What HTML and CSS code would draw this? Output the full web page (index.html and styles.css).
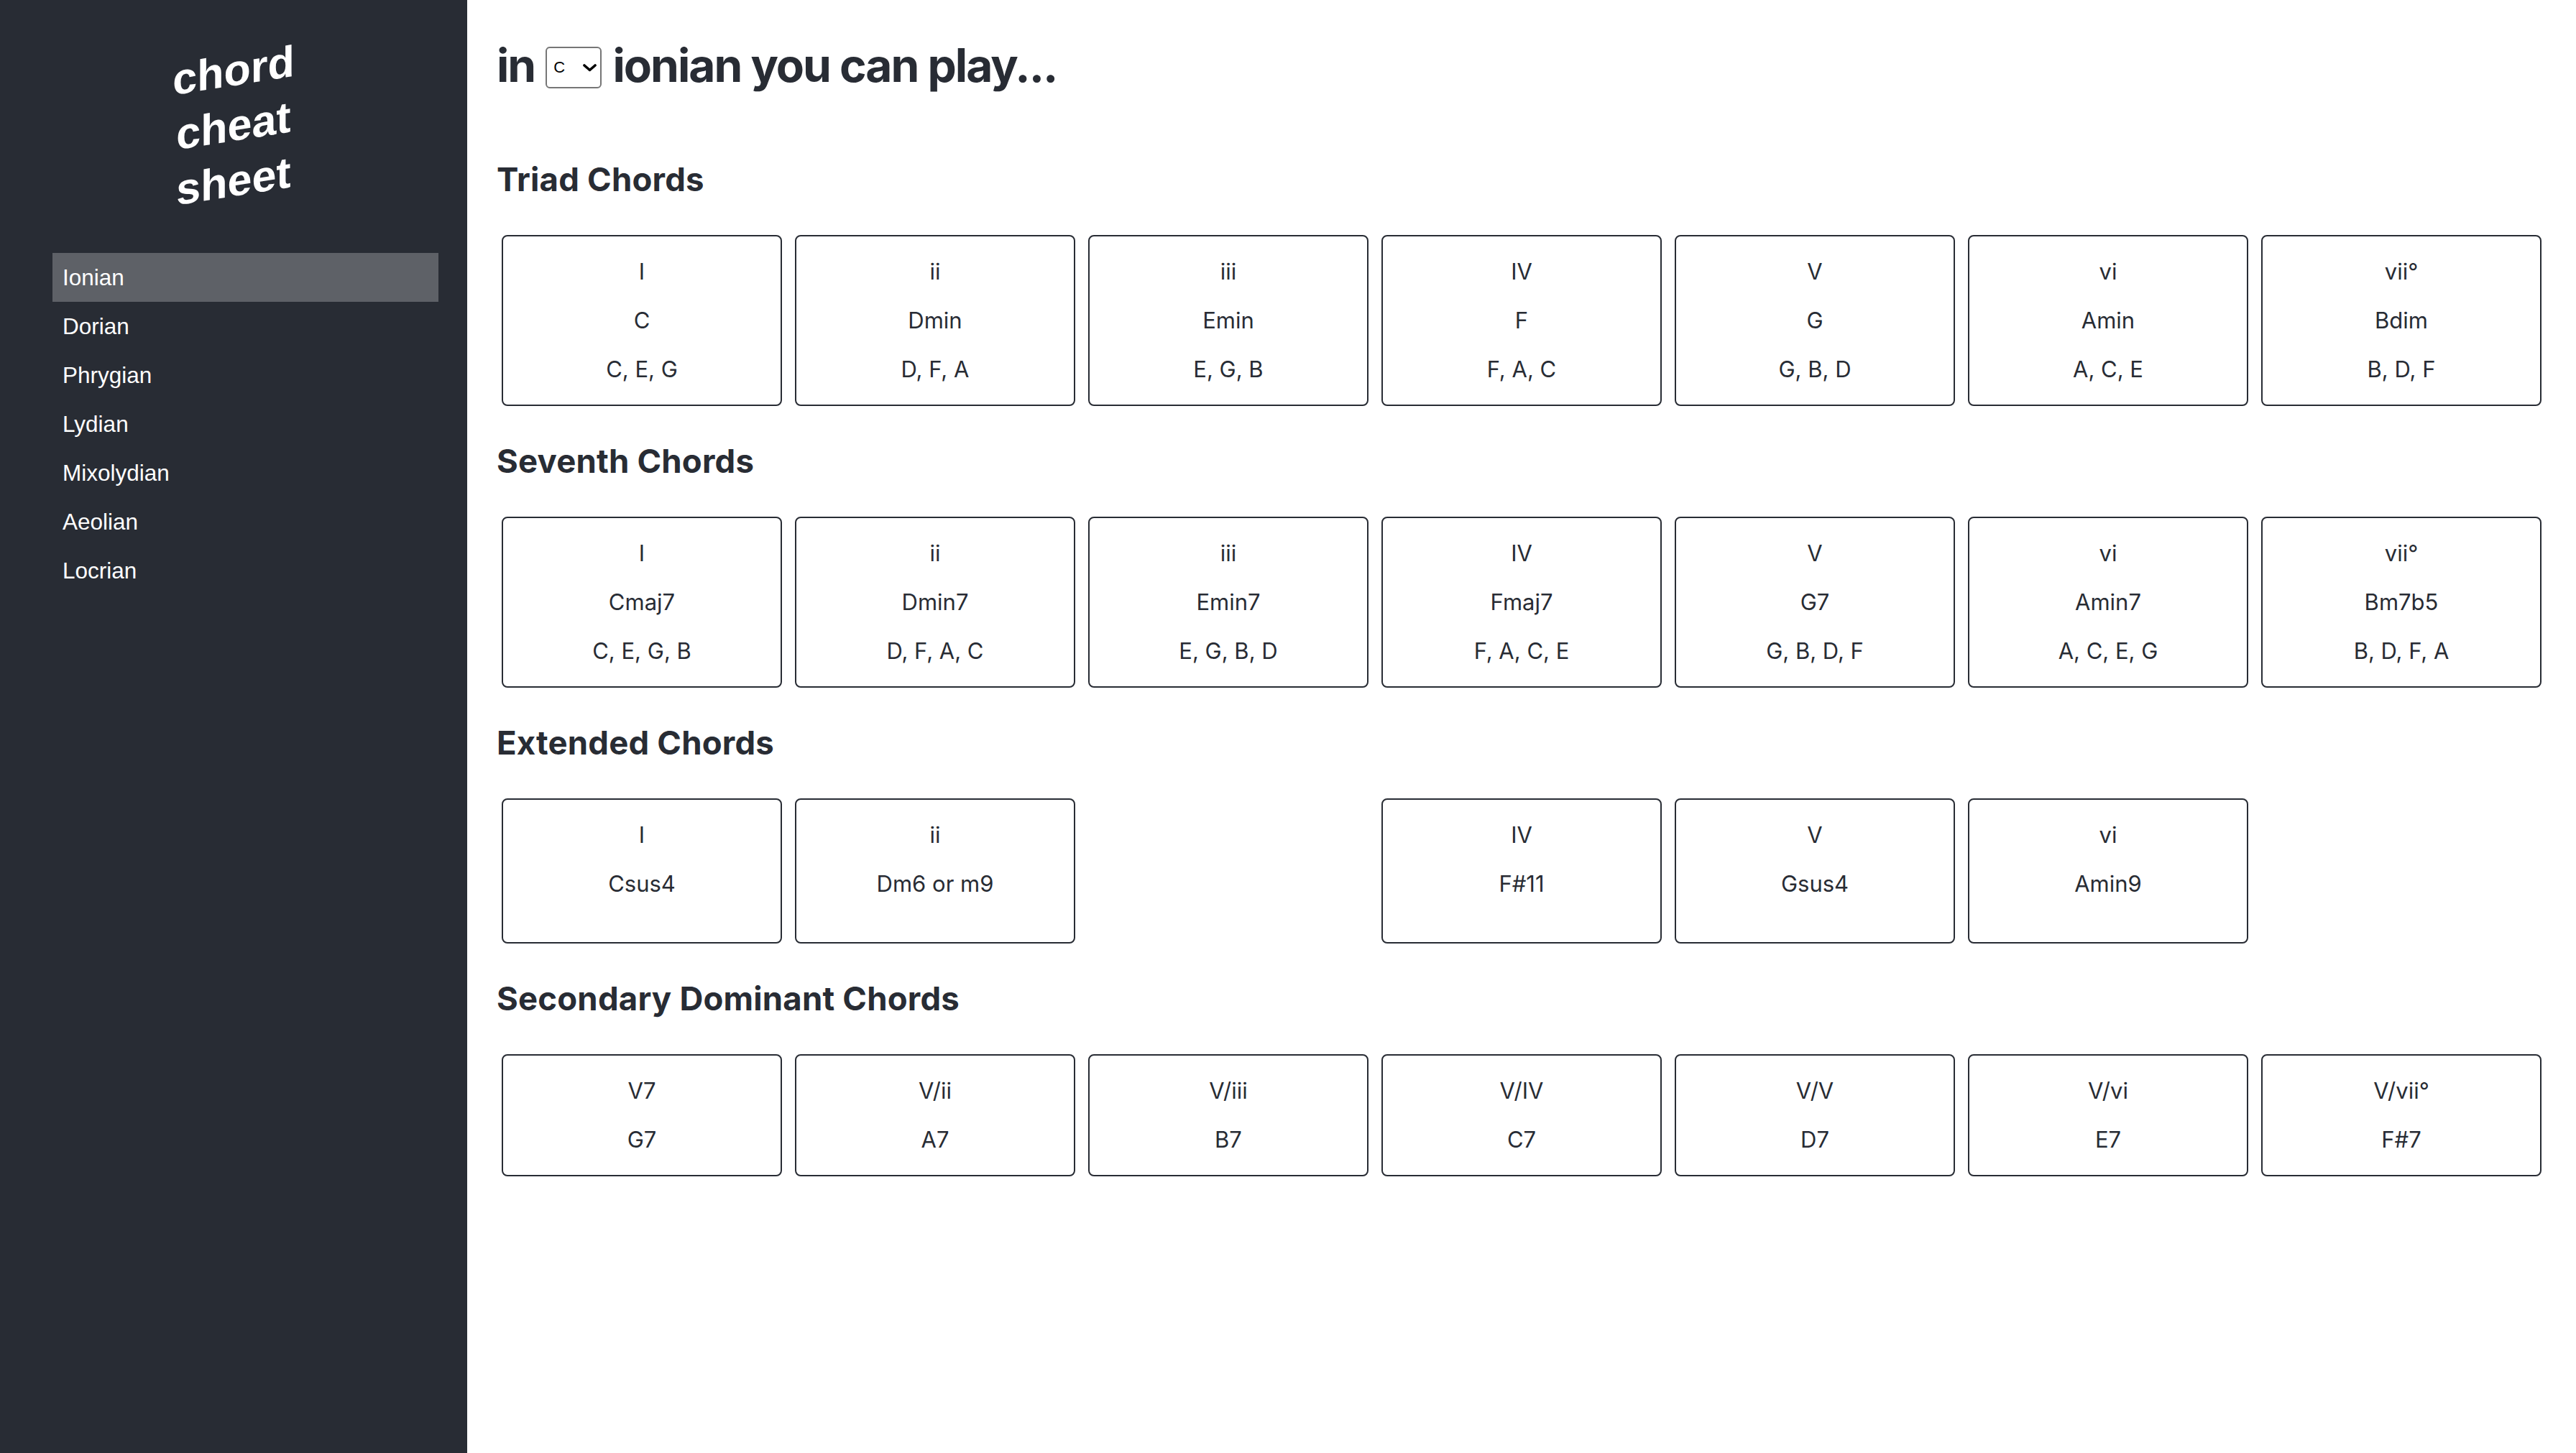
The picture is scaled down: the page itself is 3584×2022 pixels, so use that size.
FILE: index.html
```html
<!DOCTYPE html>
<html lang="en">
<head>
<meta charset="utf-8">
<title>chord cheat sheet</title>
<link rel="stylesheet" href="styles.css">
</head>
<body>
<div class="app">
  <aside class="sidebar">
    <div class="logo">chord<br>cheat<br>sheet</div>
    <nav class="modes">
      <a class="mode active">Ionian</a>
      <a class="mode">Dorian</a>
      <a class="mode">Phrygian</a>
      <a class="mode">Lydian</a>
      <a class="mode">Mixolydian</a>
      <a class="mode">Aeolian</a>
      <a class="mode">Locrian</a>
    </nav>
  </aside>
  <main class="content">
    <h1 class="title">in <span class="key-select"><select class="key"><option>C</option><option>D</option><option>E</option><option>F</option><option>G</option><option>A</option><option>B</option></select><svg class="chevron" width="19" height="11" viewBox="0 0 19 11"><polyline points="2,2 9.5,8.5 17,2" fill="none" stroke="#000" stroke-width="3.6" stroke-linecap="round" stroke-linejoin="round"/></svg></span> ionian you can play...</h1>

    <section class="section">
      <h2 class="section-title">Triad Chords</h2>
      <div class="cards">
        <div class="card"><div class="line">I</div><div class="line">C</div><div class="line">C, E, G</div></div>
        <div class="card"><div class="line">ii</div><div class="line">Dmin</div><div class="line">D, F, A</div></div>
        <div class="card"><div class="line">iii</div><div class="line">Emin</div><div class="line">E, G, B</div></div>
        <div class="card"><div class="line">IV</div><div class="line">F</div><div class="line">F, A, C</div></div>
        <div class="card"><div class="line">V</div><div class="line">G</div><div class="line">G, B, D</div></div>
        <div class="card"><div class="line">vi</div><div class="line">Amin</div><div class="line">A, C, E</div></div>
        <div class="card"><div class="line">vii°</div><div class="line">Bdim</div><div class="line">B, D, F</div></div>
      </div>
    </section>

    <section class="section">
      <h2 class="section-title">Seventh Chords</h2>
      <div class="cards">
        <div class="card"><div class="line">I</div><div class="line">Cmaj7</div><div class="line">C, E, G, B</div></div>
        <div class="card"><div class="line">ii</div><div class="line">Dmin7</div><div class="line">D, F, A, C</div></div>
        <div class="card"><div class="line">iii</div><div class="line">Emin7</div><div class="line">E, G, B, D</div></div>
        <div class="card"><div class="line">IV</div><div class="line">Fmaj7</div><div class="line">F, A, C, E</div></div>
        <div class="card"><div class="line">V</div><div class="line">G7</div><div class="line">G, B, D, F</div></div>
        <div class="card"><div class="line">vi</div><div class="line">Amin7</div><div class="line">A, C, E, G</div></div>
        <div class="card"><div class="line">vii°</div><div class="line">Bm7b5</div><div class="line">B, D, F, A</div></div>
      </div>
    </section>

    <section class="section">
      <h2 class="section-title">Extended Chords</h2>
      <div class="cards">
        <div class="card"><div class="line">I</div><div class="line">Csus4</div><div class="line empty"></div></div>
        <div class="card"><div class="line">ii</div><div class="line">Dm6 or m9</div><div class="line empty"></div></div>
        <div class="slot"></div>
        <div class="card"><div class="line">IV</div><div class="line">F#11</div><div class="line empty"></div></div>
        <div class="card"><div class="line">V</div><div class="line">Gsus4</div><div class="line empty"></div></div>
        <div class="card"><div class="line">vi</div><div class="line">Amin9</div><div class="line empty"></div></div>
        <div class="slot"></div>
      </div>
    </section>

    <section class="section">
      <h2 class="section-title">Secondary Dominant Chords</h2>
      <div class="cards">
        <div class="card"><div class="line">V7</div><div class="line">G7</div></div>
        <div class="card"><div class="line">V/ii</div><div class="line">A7</div></div>
        <div class="card"><div class="line">V/iii</div><div class="line">B7</div></div>
        <div class="card"><div class="line">V/IV</div><div class="line">C7</div></div>
        <div class="card"><div class="line">V/V</div><div class="line">D7</div></div>
        <div class="card"><div class="line">V/vi</div><div class="line">E7</div></div>
        <div class="card"><div class="line">V/vii°</div><div class="line">F#7</div></div>
      </div>
    </section>
  </main>
</div>
</body>
</html>
```

FILE: styles.css
```css
* { box-sizing: border-box; }

html, body {
  margin: 0;
  padding: 0;
  background: #ffffff;
}

body {
  font-family: Inter, "Noto Sans", "DejaVu Sans", sans-serif;
  color: #282c34;
}

.app {
  display: flex;
  min-height: 100vh;
}

.sidebar {
  width: 650px;
  flex: 0 0 650px;
  background: #282c34;
  color: #ffffff;
  display: flex;
  flex-direction: column;
  padding-top: 60px;
}

.logo {
  font-family: "Liberation Sans", Arial, sans-serif;
  font-weight: 700;
  font-size: 61px;
  line-height: 77px;
  text-align: center;
  transform: skewY(-9deg);
  color: #ffffff;
}

.modes {
  display: flex;
  flex-direction: column;
  margin-top: 61px;
  padding: 0 40px 0 73px;
}

.mode {
  display: block;
  padding: 16px 14px;
  font-family: "Liberation Sans", Arial, sans-serif;
  font-size: 31.5px;
  line-height: 36px;
  color: #ffffff;
  text-decoration: none;
}

.mode.active {
  background: rgba(255, 255, 255, 0.25);
}

.content {
  flex: 1;
  display: flex;
  flex-direction: column;
  padding: 0 41px 60px 41px;
}

.title {
  margin: 52px 0 43px 0;
  font-size: 64px;
  line-height: 78px;
  font-weight: 700;
  letter-spacing: -2px;
  white-space: nowrap;
}

.key-select {
  position: relative;
  display: inline-block;
  vertical-align: middle;
  width: 78px;
  height: 58px;
  margin: -6px 2px 0 2px;
  letter-spacing: 0;
}

.key {
  -webkit-appearance: none;
  appearance: none;
  display: block;
  width: 78px;
  height: 58px;
  border: 2px solid #767676;
  border-radius: 6px;
  background: #ffffff;
  color: #000000;
  font-family: "Liberation Sans", Arial, sans-serif;
  font-size: 22px;
  padding: 0 0 0 9px;
  margin: 0;
}

.chevron {
  position: absolute;
  right: 7px;
  top: 24px;
  pointer-events: none;
}

.section {
  display: flex;
  flex-direction: column;
}

.section-title {
  margin: 50px 0 50px 0;
  font-size: 45.5px;
  line-height: 54px;
  font-weight: 700;
  letter-spacing: 0.2px;
}

.cards {
  display: grid;
  grid-template-columns: repeat(7, 1fr);
  gap: 18px;
  padding: 0 7px;
}

.card {
  border: 2px solid #282c34;
  border-radius: 8px;
  padding: 31px 10px;
  display: flex;
  flex-direction: column;
  gap: 32px;
  text-align: center;
  font-size: 31px;
  line-height: 36px;
}

.line.empty {
  height: 0;
}
```
